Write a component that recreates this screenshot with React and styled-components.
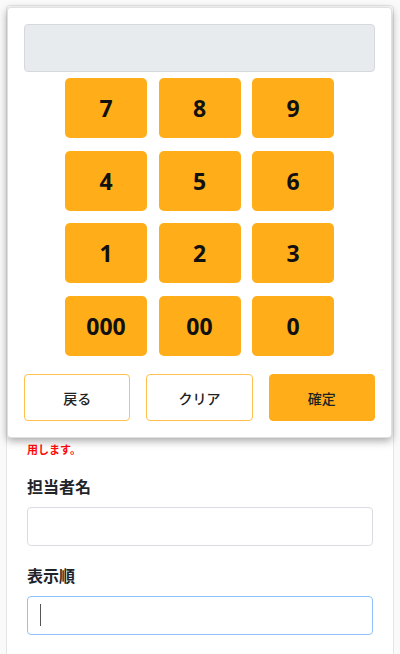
import React from "react";
import styled, { createGlobalStyle } from "styled-components";

const Global = createGlobalStyle`
  html, body { margin: 0; padding: 0; background: #fafafa; }
  body { font-family: "Noto Sans", "Noto Sans CJK JP", sans-serif; color: #212529; }
  * { box-sizing: border-box; }
`;

const Page = styled.div`
  position: relative;
  width: 400px;
  height: 654px;
  overflow: hidden;
  padding: 5px 6px 0 6px;
`;

const Card = styled.div`
  background: #fff;
  border: 1px solid #e6e6e6;
  border-radius: 4px;
  min-height: 700px;
`;

const CardBody = styled.div`
  padding: 435px 20px 20px 20px;
`;

const Group = styled.div`
  margin-bottom: ${(p) => (p.$last ? 0 : 18)}px;
`;

const Label = styled.div`
  font-size: 16px;
  line-height: 24px;
  font-weight: 700;
  color: #212529;
  margin-bottom: 8px;
`;

const InputWrap = styled.div`
  position: relative;
`;

const Input = styled.input`
  display: block;
  width: 100%;
  height: 39px;
  border: 1px solid ${(p) => (p.$focused ? "#8ec2fb" : "#d9dde2")};
  border-radius: 4px;
  background: #fff;
  padding: 0 12px;
  font-size: 16px;
  font-family: inherit;
  outline: none;
`;

const Caret = styled.span`
  position: absolute;
  left: 13px;
  top: 8px;
  width: 1px;
  height: 22px;
  background: #555;
`;

const Note = styled.div`
  font-size: 11px;
  line-height: 16px;
  font-weight: 700;
  color: #ff0a0a;
  margin: 1px 0 17px 0;
`;

const Popup = styled.div`
  position: absolute;
  top: 7px;
  left: 7px;
  width: 385px;
  height: 431px;
  background: #fff;
  border: 1px solid rgba(0, 0, 0, 0.12);
  border-radius: 4px;
  box-shadow: 0 3px 9px rgba(0, 0, 0, 0.35);
  padding: 16px;
  display: flex;
  flex-direction: column;
`;

const Display = styled.div`
  height: 50px;
  background: #e8ebee;
  border: 1px solid #d5d9dd;
  border-radius: 4px;
`;

const Keypad = styled.div`
  margin-top: 6px;
  display: grid;
  grid-template-columns: repeat(3, 82px);
  grid-auto-rows: 60px;
  column-gap: 11.5px;
  row-gap: 12.7px;
  justify-content: center;
`;

const Key = styled.button`
  border: none;
  border-radius: 5px;
  background: #ffae19;
  color: #111;
  font-family: "Noto Sans", sans-serif;
  font-weight: 700;
  font-size: 23px;
  padding: 0;
  display: flex;
  align-items: center;
  justify-content: center;
  cursor: pointer;
`;

const Actions = styled.div`
  margin-top: 18px;
  display: grid;
  grid-template-columns: repeat(3, 1fr);
  gap: 16px;
`;

const ActionButton = styled.button`
  height: 47px;
  border-radius: 4px;
  border: 1px solid ${(p) => (p.$primary ? "#ffae19" : "#ffc04d")};
  background: ${(p) => (p.$primary ? "#ffae19" : "#fff")};
  color: #222;
  font-family: "Noto Sans CJK JP", sans-serif;
  font-size: 14px;
  font-weight: 500;
  padding: 0;
  cursor: pointer;
`;

const keys = ["7", "8", "9", "4", "5", "6", "1", "2", "3", "000", "00", "0"];

export default function App() {
  return (
    <>
      <Global />
      <Page>
        <Card>
          <CardBody>
            <Note>用します。</Note>
            <Group>
              <Label>担当者名</Label>
              <Input />
            </Group>
            <Group $last>
              <Label>表示順</Label>
              <InputWrap>
                <Input $focused />
                <Caret />
              </InputWrap>
            </Group>
          </CardBody>
        </Card>
        <Popup>
          <Display />
          <Keypad>
            {keys.map((k) => (
              <Key key={k}>{k}</Key>
            ))}
          </Keypad>
          <Actions>
            <ActionButton>戻る</ActionButton>
            <ActionButton>クリア</ActionButton>
            <ActionButton $primary>確定</ActionButton>
          </Actions>
        </Popup>
      </Page>
    </>
  );
}
